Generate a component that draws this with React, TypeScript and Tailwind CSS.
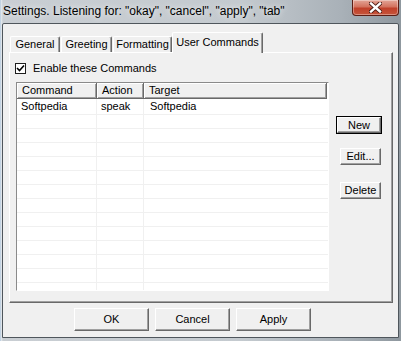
import React from 'react';

interface WinButtonProps {
    label: string;
    className?: string;
    isDefault?: boolean;
}

// classic raised 3D button
const WinButton: React.FC<WinButtonProps> = ({ label, className = '', isDefault = false }) => {
    const shadow = isDefault
        ? 'shadow-[0_0_0_1px_#000,inset_-1px_-1px_0_#a0a0a0]'
        : 'shadow-[inset_-1px_-1px_0_#a0a0a0]';
    return (
        <button
            className={`flex items-center justify-center border border-t-white border-l-white border-r-[#696969] border-b-[#696969] bg-[#f0f0f0] text-[11px] leading-none text-black ${shadow} ${className}`}
        >
            {label}
        </button>
    );
};

interface TabProps {
    label: string;
    className?: string;
    selected?: boolean;
}

const Tab: React.FC<TabProps> = ({ label, className = '', selected = false }) => {
    if (selected) {
        return (
            <div
                className={`relative z-10 -mb-px flex h-[21px] items-center justify-center rounded-t-[2px] border-t border-l border-r border-t-white border-l-white border-r-[#696969] bg-[#f0f0f0] pb-[2px] text-[11px] shadow-[inset_-1px_0_0_#a0a0a0] ${className}`}
            >
                {label}
            </div>
        );
    }
    return (
        <div
            className={`flex h-[16px] items-center justify-center rounded-t-[2px] border-t border-l border-r border-t-white border-l-white border-r-[#696969] bg-[#f0f0f0] text-[11px] shadow-[inset_-1px_0_0_#a0a0a0] ${className}`}
        >
            {label}
        </div>
    );
};

const rows = [
    { command: 'Softpedia', action: 'speak', target: 'Softpedia' },
];

const App: React.FC = () => {
    const emptyRows = Array.from({ length: 12 });

    return (
        <div className="relative flex h-[341px] w-[401px] flex-col overflow-hidden bg-[linear-gradient(90deg,#9fb9d3_0px,#e6ecf1_1px,#c9ced3_3px,#c4cacf_60%,#a9b1b8_85%,#8f989f_100%)] font-['Liberation_Sans',Arial,sans-serif] text-black">
            {/* Title bar */}
            <div className="flex h-[23px] items-center pl-[3px] pb-[1px] text-[12px] [text-shadow:0_0_6px_#ffffff]">
                Settings. Listening for: "okay", "cancel", "apply", "tab"
            </div>

            {/* Close button */}
            <div className="absolute top-0 right-[2px] flex h-[16px] w-[47px] items-center justify-center rounded-b-[4px] border border-t-0 border-[#5b1d14] bg-[linear-gradient(180deg,#e3a597_0%,#d3735f_45%,#c0402a_55%,#c6553b_100%)] shadow-[inset_0_0_0_1px_rgba(255,255,255,0.35)]">
                <svg width="13" height="11" viewBox="0 0 13 11">
                    <path
                        d="M2 1.5 L11 9.5 M11 1.5 L2 9.5"
                        stroke="#4a1a12"
                        strokeWidth="4.2"
                        strokeLinecap="square"
                    />
                    <path
                        d="M2 1.5 L11 9.5 M11 1.5 L2 9.5"
                        stroke="#ffffff"
                        strokeWidth="2.4"
                        strokeLinecap="square"
                    />
                </svg>
            </div>

            {/* Client area */}
            <div className="ml-[2px] flex h-[315px] w-[397px] flex-col rounded-t-[2px] border border-[#4f565c] bg-[#f0f0f0]">
                {/* Tab strip */}
                <div className="flex h-[28px] items-end">
                    <Tab label="General" className="ml-[7px] w-[50px]" />
                    <Tab label="Greeting" className="ml-[1px] w-[51px]" />
                    <Tab label="Formatting" className="ml-[1px] w-[59px]" />
                    <Tab label="User Commands" selected className="w-[91px]" />
                </div>

                {/* Tab panel */}
                <div className="ml-[6px] flex h-[251px] w-[384px] border-t border-l border-r border-b border-t-white border-l-white border-r-[#696969] border-b-[#696969] shadow-[inset_-1px_-1px_0_#a0a0a0]">
                    <div className="flex flex-col pl-[6px]">
                        {/* Checkbox */}
                        <div className="mt-[10px] flex h-[11px] items-center">
                            <div className="ml-[-1px] flex h-[11px] w-[11px] items-center justify-center border border-[#1e1e1e] bg-white">
                                <svg width="9" height="9" viewBox="0 0 9 9">
                                    <path d="M1 4 L3.5 6.5 L8 1.5" stroke="#000" strokeWidth="1.6" fill="none" />
                                </svg>
                            </div>
                            <span className="ml-[7px] text-[11px] leading-none">Enable these Commands</span>
                        </div>

                        {/* List view */}
                        <div className="mt-[8px] flex h-[209px] w-[313px] flex-col border border-t-[#8a8a8a] border-l-[#8a8a8a] border-r-white border-b-white bg-white">
                            {/* Header */}
                            <div className="flex h-[16px] text-[11px]">
                                <div className="flex w-[80px] items-center border-r border-b border-r-[#696969] border-b-[#696969] bg-[#f0f0f0] pl-[5px] shadow-[inset_1px_1px_0_#fff,inset_-1px_-1px_0_#a0a0a0]">
                                    Command
                                </div>
                                <div className="flex w-[47px] items-center border-r border-b border-r-[#696969] border-b-[#696969] bg-[#f0f0f0] pl-[5px] shadow-[inset_1px_1px_0_#fff,inset_-1px_-1px_0_#a0a0a0]">
                                    Action
                                </div>
                                <div className="flex w-[183px] items-center border-r border-b border-r-[#696969] border-b-[#696969] bg-[#f0f0f0] pl-[5px] shadow-[inset_1px_1px_0_#fff,inset_-1px_-1px_0_#a0a0a0]">
                                    Target
                                </div>
                            </div>

                            {/* Rows */}
                            {rows.map(row => (
                                <div key={row.command} className="flex h-[16px] border-b border-[#f0f0f0] text-[11px]">
                                    <div className="flex w-[80px] items-center border-r border-[#f0f0f0] pl-[4px]">{row.command}</div>
                                    <div className="flex w-[47px] items-center border-r border-[#f0f0f0] pl-[4px]">{row.action}</div>
                                    <div className="flex flex-1 items-center pl-[6px]">{row.target}</div>
                                </div>
                            ))}
                            {emptyRows.map((_, i) => (
                                <div key={i} className="flex h-[14px] border-b border-[#f0f0f0]">
                                    <div className="w-[80px] border-r border-[#f0f0f0]" />
                                    <div className="w-[47px] border-r border-[#f0f0f0]" />
                                    <div className="flex-1" />
                                </div>
                            ))}
                            <div className="flex flex-1">
                                <div className="w-[80px] border-r border-[#f0f0f0]" />
                                <div className="w-[47px] border-r border-[#f0f0f0]" />
                                <div className="flex-1" />
                            </div>
                        </div>
                    </div>

                    {/* Side buttons */}
                    <div className="ml-[8px] flex flex-col items-end">
                        <WinButton label="New" isDefault className="mt-[64px] h-[16px] w-[44px]" />
                        <WinButton label="Edit..." className="mt-[15px] h-[17px] w-[41px]" />
                        <WinButton label="Delete" className="mt-[17px] h-[17px] w-[41px]" />
                    </div>
                </div>

                {/* Dialog buttons */}
                <div className="mt-[5px] flex gap-[6px] pl-[71px]">
                    <WinButton label="OK" className="h-[23px] w-[75px]" />
                    <WinButton label="Cancel" className="h-[23px] w-[75px]" />
                    <WinButton label="Apply" className="h-[23px] w-[75px]" />
                </div>
            </div>
        </div>
    );
};

export default App;
